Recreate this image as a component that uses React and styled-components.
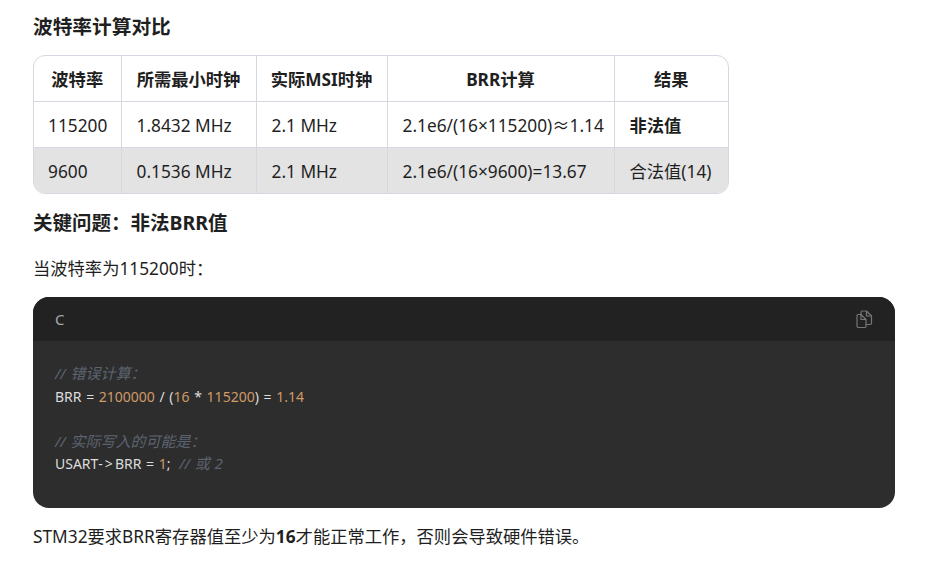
import React from "react";
import styled, { createGlobalStyle } from "styled-components";

const GlobalStyle = createGlobalStyle`
  html, body {
    margin: 0;
    padding: 0;
    background: #fff;
  }
  body {
    font-family: "Noto Sans", "Noto Sans CJK SC", sans-serif;
    color: #1f1f1f;
  }
`;

const rows = [
  { baud: "115200", need: "1.8432 MHz", msi: "2.1 MHz", brr: "2.1e6/(16×115200)≈1.14", result: "非法值", bad: true },
  { baud: "9600", need: "0.1536 MHz", msi: "2.1 MHz", brr: "2.1e6/(16×9600)=13.67", result: "合法值(14)" },
];

const CopyIcon = () => (
  <svg width="17" height="19" viewBox="0 0 17 19" fill="none" stroke="#77777a" strokeWidth="1.2" strokeLinejoin="round">
    <path d="M5 4.5H2.2A1.2 1.2 0 0 0 1 5.7v10.6a1.2 1.2 0 0 0 1.2 1.2h6.6a1.2 1.2 0 0 0 1.2-1.2V9.5L5 4.5z" />
    <path d="M5 4.5v5h5" />
    <path d="M5 4.5V2.2A1.2 1.2 0 0 1 6.2 1h4.3L15.5 6v7.3a1.2 1.2 0 0 1-1.2 1.2H10" />
    <path d="M10.5 1v5h5" />
  </svg>
);

const App = () => (
  <Page>
    <GlobalStyle />
    <Title>波特率计算对比</Title>
    <TableWrap>
      <Table>
        <colgroup>
          <col width="87" />
          <col width="135" />
          <col width="131" />
          <col width="227" />
          <col width="114" />
        </colgroup>
        <thead>
          <tr>
            <Th>波特率</Th>
            <Th>所需最小时钟</Th>
            <Th>实际MSI时钟</Th>
            <Th>BRR计算</Th>
            <Th>结果</Th>
          </tr>
        </thead>
        <tbody>
          {rows.map((row) => (
            <Row key={row.baud}>
              <Td>{row.baud}</Td>
              <Td>{row.need}</Td>
              <Td>{row.msi}</Td>
              <Td>{row.brr}</Td>
              <Td>{row.bad ? <strong>{row.result}</strong> : row.result}</Td>
            </Row>
          ))}
        </tbody>
      </Table>
    </TableWrap>
    <SubTitle>关键问题：非法BRR值</SubTitle>
    <Para>当波特率为115200时：</Para>
    <CodeBlock>
      <CodeHeader>
        <Lang>C</Lang>
        <CopyIcon />
      </CodeHeader>
      <Code>
        <Comment>// 错误计算：</Comment>
        {"\n"}BRR = <Num>2100000</Num> / (<Num>16</Num> * <Num>115200</Num>) = <Num>1.14</Num>
        {"\n\n"}
        <Comment>// 实际写入的可能是：</Comment>
        {"\n"}USART<Arrow>-&gt;</Arrow>BRR = <Num>1</Num>; <Comment $trailing>// 或 2</Comment>
      </Code>
    </CodeBlock>
    <Footer>
      STM32要求BRR寄存器值至少为<strong>16</strong>才能正常工作，否则会导致硬件错误。
    </Footer>
  </Page>
);

export default App;

const Page = styled.div`
  width: 862px;
  padding: 15px 0 0 33px;
  font-size: 17.3px;
  line-height: 24px;
`;

const Title = styled.h3`
  margin: 0 0 16px;
  font-size: 19.7px;
  line-height: 24px;
  font-weight: 700;
`;

const TableWrap = styled.div`
  width: 696px;
  border: 1px solid #d5d8e2;
  border-radius: 12px;
  overflow: hidden;
  box-sizing: border-box;
`;

const Table = styled.table`
  width: 100%;
  table-layout: fixed;
  border-collapse: collapse;
`;

const Th = styled.th`
  height: 45px;
  padding: 4px 14px 0;
  font-weight: 700;
  text-align: center;
  white-space: nowrap;
  border-left: 1px solid #d5d8e2;
  border-bottom: 1px solid #d5d8e2;
  box-sizing: border-box;
  &:first-child {
    border-left: 0;
  }
`;

const Row = styled.tr`
  &:nth-child(even) {
    background: #e3e3e3;
  }
  &:last-child td {
    border-bottom: 0;
  }
`;

const Td = styled.td`
  height: 46px;
  padding: 4px 14px 0 15px;
  white-space: nowrap;
  border-left: 1px solid #d5d8e2;
  border-bottom: 1px solid #d5d8e2;
  box-sizing: border-box;
  &:first-child {
    border-left: 0;
    padding-left: 14px;
  }
`;

const SubTitle = styled.h4`
  margin: 17px 0 0;
  font-size: 19.5px;
  line-height: 24px;
  font-weight: 700;
`;

const Para = styled.p`
  margin: 22px 0 0;
`;

const CodeBlock = styled.div`
  margin-top: 16px;
  background: #2d2d2d;
  border-radius: 16px;
  overflow: hidden;
`;

const CodeHeader = styled.div`
  height: 44px;
  padding: 0 22px;
  display: flex;
  align-items: center;
  justify-content: space-between;
  background: #222222;
`;

const Lang = styled.span`
  font-size: 15px;
  color: #a8a8a8;
`;

const Code = styled.pre`
  margin: 0;
  padding: 22px 22px 32px;
  font-family: inherit;
  font-size: 14px;
  line-height: 22.6px;
  word-spacing: 1px;
  color: #dcdcdc;
`;

const Comment = styled.span`
  color: #5c6370;
  font-size: 15px;
  line-height: 1;
  font-style: italic;
  margin-left: ${({ $trailing }) => ($trailing ? "4px" : "0")};
`;

const Num = styled.span`
  color: #d19a66;
`;

const Arrow = styled.span`
  letter-spacing: 2px;
`;

const Footer = styled.p`
  margin: 17px 0 0;
`;
